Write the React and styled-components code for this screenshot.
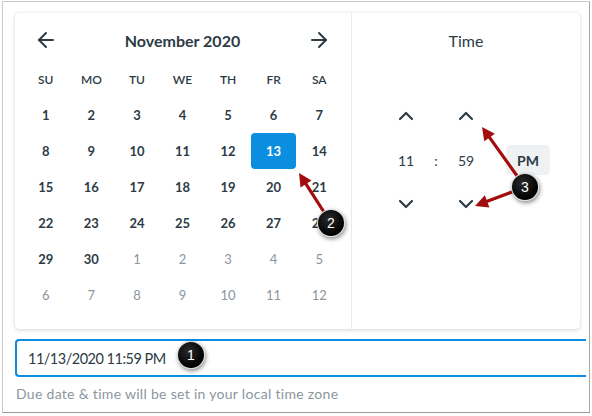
import styled, { createGlobalStyle } from "styled-components";
import { ArrowLeft, ArrowRight, ChevronUp, ChevronDown } from "lucide-react";

const GlobalStyle = createGlobalStyle`
  html, body {
    margin: 0;
    padding: 0;
    background: #fff;
  }
  body {
    font-family: Lato, "Noto Sans", sans-serif;
    color: #2d3b45;
  }
`;

const dayNames = ["SU", "MO", "TU", "WE", "TH", "FR", "SA"];

// November 2020, padded with the first days of December
const days = [
  ...Array.from({ length: 30 }, (_, i) => ({ n: i + 1, muted: false })),
  ...Array.from({ length: 12 }, (_, i) => ({ n: i + 1, muted: true })),
];

const callouts = [
  { n: 1, x: 191, y: 355 },
  { n: 2, x: 331, y: 223 },
  { n: 3, x: 525, y: 187 },
];

const arrows = [
  [331, 223, 299, 173],
  [525, 187, 482, 127],
  [525, 187, 475, 206],
];

function arrowHead(x1, y1, x2, y2) {
  const len = Math.hypot(x2 - x1, y2 - y1);
  const ux = (x2 - x1) / len;
  const uy = (y2 - y1) / len;
  const bx = x2 - ux * 13;
  const by = y2 - uy * 13;
  const px = -uy * 6.5;
  const py = ux * 6.5;
  return {
    line: [x1, y1, bx + ux * 2, by + uy * 2],
    points: `${x2},${y2} ${bx + px},${by + py} ${bx - px},${by - py}`,
  };
}

const App = () => {
  return (
    <Page>
      <GlobalStyle />
      <Frame>
        <Card>
          <CalendarPane>
            <CalHeader>
              <NavButton><ArrowLeft size={24} strokeWidth={2} /></NavButton>
              <MonthTitle>November 2020</MonthTitle>
              <NavButton><ArrowRight size={24} strokeWidth={2} /></NavButton>
            </CalHeader>
            <DayGrid>
              {dayNames.map((d) => (
                <DayName key={d}>{d}</DayName>
              ))}
              {days.map((d, i) => (
                <Day key={i} $muted={d.muted} $selected={!d.muted && d.n === 13}>
                  {d.n}
                </Day>
              ))}
            </DayGrid>
          </CalendarPane>
          <TimePane>
            <TimeTitle>Time</TimeTitle>
            <TimeRow>
              <Spinner>
                <SpinButton><ChevronUp size={24} strokeWidth={2.2} /></SpinButton>
                <SpinValue>11</SpinValue>
                <SpinButton><ChevronDown size={24} strokeWidth={2.2} /></SpinButton>
              </Spinner>
              <Colon>:</Colon>
              <Spinner>
                <SpinButton><ChevronUp size={24} strokeWidth={2.2} /></SpinButton>
                <SpinValue>59</SpinValue>
                <SpinButton><ChevronDown size={24} strokeWidth={2.2} /></SpinButton>
              </Spinner>
              <MeridiemButton>PM</MeridiemButton>
            </TimeRow>
          </TimePane>
        </Card>
        <DateInput>11/13/2020 11:59 PM</DateInput>
        <Hint>Due date &amp; time will be set in your local time zone</Hint>
      </Frame>

      <Overlay width="592" height="416">
        {arrows.map(([x1, y1, x2, y2], i) => {
          const a = arrowHead(x1, y1, x2, y2);
          return (
            <g key={i}>
              <line x1={a.line[0]} y1={a.line[1]} x2={a.line[2]} y2={a.line[3]} stroke="#a30d0d" strokeWidth="3.2" />
              <polygon points={a.points} fill="#a30d0d" />
            </g>
          );
        })}
      </Overlay>
      {callouts.map((c) => (
        <Callout key={c.n} $x={c.x} $y={c.y}>{c.n}</Callout>
      ))}
    </Page>
  );
};

const Page = styled.div`
  position: relative;
  width: 592px;
  height: 416px;
  overflow: hidden;
`;

const Frame = styled.div`
  box-sizing: border-box;
  width: 588px;
  height: 412px;
  margin: 1px 0 0 2px;
  padding: 11px 0 0 12px;
  border: 1px solid #c9c9c9;
  border-right-color: #a9a9a9;
  border-bottom-color: #9a9a9a;
  overflow: hidden;
`;

const Card = styled.div`
  display: flex;
  width: 565px;
  height: 316px;
  background: #fff;
  border-radius: 4px;
  box-shadow: 0 1px 4px rgba(0, 0, 0, 0.16), 0 0 1px rgba(0, 0, 0, 0.12);
`;

const CalendarPane = styled.div`
  box-sizing: border-box;
  width: 337px;
  padding: 8px 9px 0 8px;
  border-right: 1px solid #e8eaec;
`;

const CalHeader = styled.div`
  display: grid;
  grid-template-columns: repeat(7, 1fr);
  height: 38px;
  margin-bottom: 2px;
  align-items: center;
`;

const NavButton = styled.div`
  display: flex;
  align-items: center;
  justify-content: center;
  color: #2d3b45;
`;

const MonthTitle = styled.div`
  grid-column: span 5;
  text-align: center;
  font-size: 16px;
  font-weight: 700;
`;

const DayGrid = styled.div`
  display: grid;
  grid-template-columns: repeat(7, 1fr);
  grid-auto-rows: 36px;
`;

const DayName = styled.div`
  display: flex;
  align-items: center;
  justify-content: center;
  font-size: 12px;
  font-weight: 600;
`;

const Day = styled.div`
  display: flex;
  align-items: center;
  justify-content: center;
  font-size: 13px;
  font-weight: ${(p) => (p.$muted ? 400 : 700)};
  color: ${(p) => (p.$selected ? "#fff" : p.$muted ? "#8b969e" : "#2d3b45")};
  background: ${(p) => (p.$selected ? "#0b8de0" : "transparent")};
  border-radius: 4px;
`;

const TimePane = styled.div`
  flex: 1;
  padding-top: 8px;
`;

const TimeTitle = styled.div`
  height: 38px;
  margin-bottom: 2px;
  display: flex;
  align-items: center;
  justify-content: center;
  font-size: 16px;
`;

const TimeRow = styled.div`
  display: flex;
  align-items: center;
  margin: 35px 0 0 34px;
`;

const Spinner = styled.div`
  width: 40px;
  display: flex;
  flex-direction: column;
  align-items: center;
`;

const SpinButton = styled.div`
  height: 44px;
  display: flex;
  align-items: center;
  justify-content: center;
  color: #2d3b45;
`;

const SpinValue = styled.div`
  height: 44px;
  display: flex;
  align-items: center;
  font-size: 14px;
`;

const Colon = styled.div`
  width: 20px;
  text-align: center;
  font-size: 14px;
`;

const MeridiemButton = styled.div`
  width: 44px;
  height: 30px;
  margin-left: 20px;
  display: flex;
  align-items: center;
  justify-content: center;
  background: #f0f1f2;
  border-radius: 4px;
  font-size: 14px;
  font-weight: 700;
`;

const DateInput = styled.div`
  box-sizing: border-box;
  width: 571px;
  height: 38px;
  margin-top: 10px;
  padding-left: 11px;
  display: flex;
  align-items: center;
  border: 2px solid #0b8de0;
  border-right: none;
  border-radius: 4px 0 0 4px;
  font-size: 14.5px;
  letter-spacing: -0.5px;
`;

const Hint = styled.div`
  margin: 8px 0 0 1px;
  line-height: 18px;
  font-size: 14px;
  letter-spacing: 0.3px;
  color: #8b969e;
`;

const Overlay = styled.svg`
  position: absolute;
  left: 0;
  top: 0;
  pointer-events: none;
`;

const Callout = styled.div`
  position: absolute;
  left: ${(p) => p.$x - 14}px;
  top: ${(p) => p.$y - 14}px;
  width: 28px;
  height: 28px;
  box-sizing: border-box;
  border-radius: 50%;
  border: 1px solid rgba(255, 255, 255, 0.85);
  background: radial-gradient(circle at 40% 35%, #2a2a2a, #000 70%);
  box-shadow: 1px 2px 4px rgba(0, 0, 0, 0.45);
  color: #fff;
  font-family: "Liberation Sans", Arial, sans-serif;
  font-size: 14px;
  display: flex;
  align-items: center;
  justify-content: center;
`;

export default App;
